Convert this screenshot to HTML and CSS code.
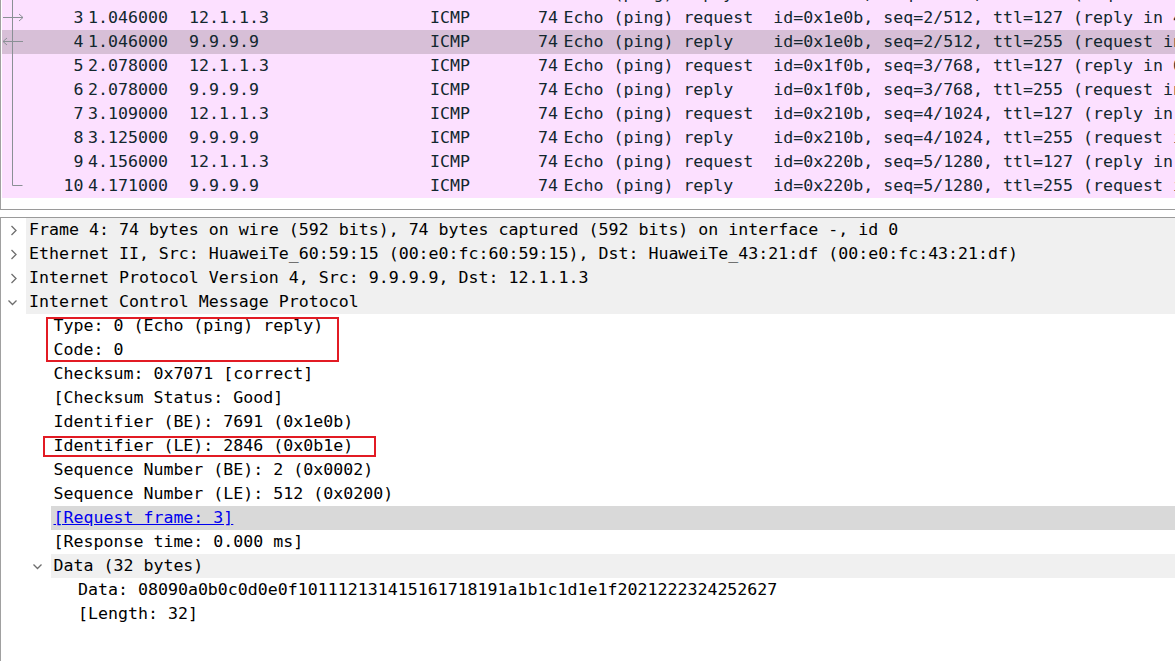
FILE: index.html
```html
<!DOCTYPE html>
<html>
<head>
<meta charset="utf-8">
<title>Wireshark</title>
<link rel="stylesheet" href="styles.css">
</head>
<body>
<div class="app">
  <div class="plist">
    <div class="rows">
      <div class="row">
        <div class="c no"><svg class="rel" viewBox="0 0 24 24"><path d="M10.5 0V24"/></svg><span>2</span></div>
        <div class="c time">0.015000</div><div class="c src">9.9.9.9</div><div class="c proto">ICMP</div><div class="c len">74</div>
        <div class="c info">Echo (ping) reply    id=0x1d0b, seq=1/256, ttl=255 (request in 1)</div>
      </div>
      <div class="row">
        <div class="c no"><svg class="rel" viewBox="0 0 24 24"><path d="M10.5 0V24M1 11.5H21M17 8L21 11.5L17 15"/></svg><span>3</span></div>
        <div class="c time">1.046000</div><div class="c src">12.1.1.3</div><div class="c proto">ICMP</div><div class="c len">74</div>
        <div class="c info">Echo (ping) request  id=0x1e0b, seq=2/512, ttl=127 (reply in 4)</div>
      </div>
      <div class="row sel">
        <div class="c no"><svg class="rel" viewBox="0 0 24 24"><path d="M10.5 0V24M1 11.5H21M5 8L1 11.5L5 15"/></svg><span>4</span></div>
        <div class="c time">1.046000</div><div class="c src">9.9.9.9</div><div class="c proto">ICMP</div><div class="c len">74</div>
        <div class="c info">Echo (ping) reply    id=0x1e0b, seq=2/512, ttl=255 (request in 3)</div>
      </div>
      <div class="row">
        <div class="c no"><svg class="rel" viewBox="0 0 24 24"><path d="M10.5 0V24"/></svg><span>5</span></div>
        <div class="c time">2.078000</div><div class="c src">12.1.1.3</div><div class="c proto">ICMP</div><div class="c len">74</div>
        <div class="c info">Echo (ping) request  id=0x1f0b, seq=3/768, ttl=127 (reply in 6)</div>
      </div>
      <div class="row">
        <div class="c no"><svg class="rel" viewBox="0 0 24 24"><path d="M10.5 0V24"/></svg><span>6</span></div>
        <div class="c time">2.078000</div><div class="c src">9.9.9.9</div><div class="c proto">ICMP</div><div class="c len">74</div>
        <div class="c info">Echo (ping) reply    id=0x1f0b, seq=3/768, ttl=255 (request in 5)</div>
      </div>
      <div class="row">
        <div class="c no"><svg class="rel" viewBox="0 0 24 24"><path d="M10.5 0V24"/></svg><span>7</span></div>
        <div class="c time">3.109000</div><div class="c src">12.1.1.3</div><div class="c proto">ICMP</div><div class="c len">74</div>
        <div class="c info">Echo (ping) request  id=0x210b, seq=4/1024, ttl=127 (reply in 8)</div>
      </div>
      <div class="row">
        <div class="c no"><svg class="rel" viewBox="0 0 24 24"><path d="M10.5 0V24"/></svg><span>8</span></div>
        <div class="c time">3.125000</div><div class="c src">9.9.9.9</div><div class="c proto">ICMP</div><div class="c len">74</div>
        <div class="c info">Echo (ping) reply    id=0x210b, seq=4/1024, ttl=255 (request in 7)</div>
      </div>
      <div class="row">
        <div class="c no"><svg class="rel" viewBox="0 0 24 24"><path d="M10.5 0V24"/></svg><span>9</span></div>
        <div class="c time">4.156000</div><div class="c src">12.1.1.3</div><div class="c proto">ICMP</div><div class="c len">74</div>
        <div class="c info">Echo (ping) request  id=0x220b, seq=5/1280, ttl=127 (reply in 10)</div>
      </div>
      <div class="row">
        <div class="c no"><svg class="rel" viewBox="0 0 24 24"><path d="M10.5 0V11.5H20.5"/></svg><span>10</span></div>
        <div class="c time">4.171000</div><div class="c src">9.9.9.9</div><div class="c proto">ICMP</div><div class="c len">74</div>
        <div class="c info">Echo (ping) reply    id=0x220b, seq=5/1280, ttl=255 (request in 9)</div>
      </div>
    </div>
  </div>
  <div class="split"></div>
  <div class="tree">
    <div class="node shade"><span class="tw"><svg viewBox="0 0 25 24"><path d="M10.5 8L15 12.5L10.5 17"/></svg></span><span class="lbl">Frame 4: 74 bytes on wire (592 bits), 74 bytes captured (592 bits) on interface -, id 0</span></div>
    <div class="node shade"><span class="tw"><svg viewBox="0 0 25 24"><path d="M10.5 8L15 12.5L10.5 17"/></svg></span><span class="lbl">Ethernet II, Src: HuaweiTe_60:59:15 (00:e0:fc:60:59:15), Dst: HuaweiTe_43:21:df (00:e0:fc:43:21:df)</span></div>
    <div class="node shade"><span class="tw"><svg viewBox="0 0 25 24"><path d="M10.5 8L15 12.5L10.5 17"/></svg></span><span class="lbl">Internet Protocol Version 4, Src: 9.9.9.9, Dst: 12.1.1.3</span></div>
    <div class="node shade"><span class="tw"><svg viewBox="0 0 25 24"><path d="M7.5 10.5L11.5 14.5L15.5 10.5"/></svg></span><span class="lbl">Internet Control Message Protocol</span></div>
    <div class="node l1"><span class="tw"></span><span class="lbl">Type: 0 (Echo (ping) reply)</span></div>
    <div class="node l1"><span class="tw"></span><span class="lbl">Code: 0</span></div>
    <div class="node l1"><span class="tw"></span><span class="lbl">Checksum: 0x7071 [correct]</span></div>
    <div class="node l1"><span class="tw"></span><span class="lbl">[Checksum Status: Good]</span></div>
    <div class="node l1"><span class="tw"></span><span class="lbl">Identifier (BE): 7691 (0x1e0b)</span></div>
    <div class="node l1"><span class="tw"></span><span class="lbl">Identifier (LE): 2846 (0x0b1e)</span></div>
    <div class="node l1"><span class="tw"></span><span class="lbl">Sequence Number (BE): 2 (0x0002)</span></div>
    <div class="node l1"><span class="tw"></span><span class="lbl">Sequence Number (LE): 512 (0x0200)</span></div>
    <div class="node l1 cur"><span class="tw"></span><span class="lbl"><a class="link">[Request frame: 3]</a></span></div>
    <div class="node l1"><span class="tw"></span><span class="lbl">[Response time: 0.000 ms]</span></div>
    <div class="node l1 shade"><span class="tw"><svg viewBox="0 0 25 24"><path d="M7.5 10.5L11.5 14.5L15.5 10.5"/></svg></span><span class="lbl">Data (32 bytes)</span></div>
    <div class="node l2"><span class="tw"></span><span class="lbl">Data: 08090a0b0c0d0e0f101112131415161718191a1b1c1d1e1f2021222324252627</span></div>
    <div class="node l2"><span class="tw"></span><span class="lbl">[Length: 32]</span></div>
    <div class="mark mark-a"></div>
    <div class="mark mark-b"></div>
  </div>
</div>
</body>
</html>
```
FILE: styles.css
```css
html, body {
  margin: 0;
  padding: 0;
  background: #ffffff;
  overflow: hidden;
}
.app {
  width: 1175px;
  height: 661px;
  display: flex;
  flex-direction: column;
  font-family: "DejaVu Sans Mono", "Liberation Mono", monospace;
  font-size: 16.6px;
}
.plist {
  height: 209px;
  flex: none;
  border-left: 1px solid #a0a0a0;
  border-bottom: 1px solid #9a9a9a;
  padding-left: 1px;
  overflow: hidden;
  background: #ffffff;
}
.rows {
  margin-top: -18px;
}
.row {
  display: grid;
  grid-template-columns: 86px 101px 241px 70px 58px 1fr;
  height: 24px;
  line-height: 24px;
  background: #fce0ff;
  color: #12272e;
  white-space: pre;
}
.row.sel {
  background: #d7bfd7;
}
.c {
  overflow: hidden;
}
.no {
  display: flex;
  justify-content: space-between;
  padding-right: 4.5px;
}
.rel {
  width: 24px;
  height: 24px;
  flex: none;
}
.rel path {
  fill: none;
  stroke: #8a9095;
  stroke-width: 1;
}
.len {
  text-align: right;
}
.info {
  padding-left: 5.5px;
  overflow: visible;
}
.split {
  height: 7px;
  flex: none;
  background: #ffffff;
}
.tree {
  position: relative;
  flex: 1;
  border-top: 1px solid #9a9a9a;
  border-left: 1px solid #a0a0a0;
  color: #000000;
  overflow: hidden;
}
.node {
  display: flex;
  height: 24px;
  line-height: 24px;
  white-space: pre;
}
.node.l1 {
  padding-left: 24.5px;
}
.node.l2 {
  padding-left: 49px;
}
.tw {
  width: 25px;
  height: 24px;
  flex: none;
}
.tw svg {
  width: 25px;
  height: 24px;
  display: block;
}
.tw path {
  fill: none;
  stroke: #6e6e6e;
  stroke-width: 1.3;
}
.lbl {
  flex: 1;
  padding-left: 3px;
}
.shade .lbl {
  background: #f0f0f0;
}
.cur .lbl {
  background: #d9d9d9;
}
.link {
  color: #0000ee;
  text-decoration: underline;
}
.mark {
  position: absolute;
  box-sizing: border-box;
  border: 2px solid #e21b24;
}
.mark-a {
  left: 45px;
  top: 99px;
  width: 293px;
  height: 45px;
}
.mark-b {
  left: 42px;
  top: 218px;
  width: 333px;
  height: 21px;
}
```
